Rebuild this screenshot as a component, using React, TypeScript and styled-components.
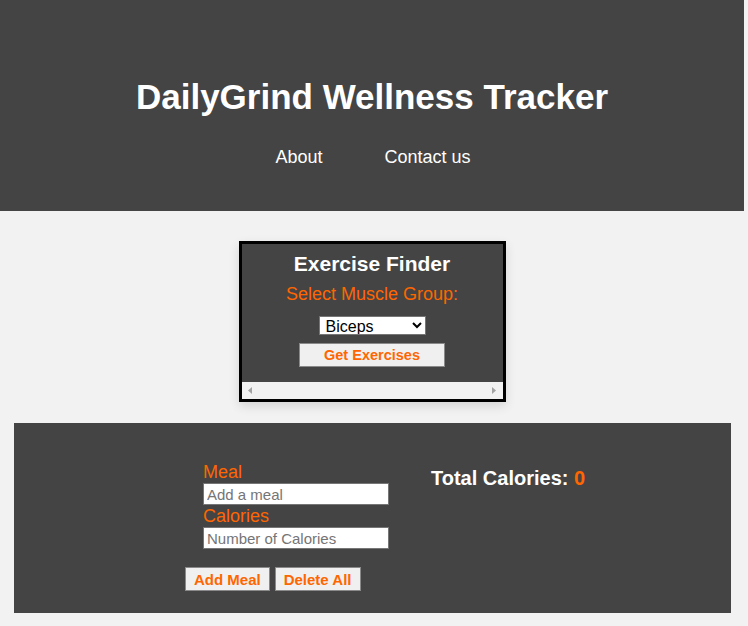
import React, { useState } from 'react'
import styled, { createGlobalStyle } from 'styled-components'

const orange = '#ff6600'
const dark = '#444444'

const GlobalStyle = createGlobalStyle`
  body {
    margin: 0;
    background: #f2f2f2;
    font-family: 'Liberation Sans', Arial, sans-serif;
  }
`

const muscleGroups = ['Biceps', 'Triceps', 'Chest', 'Back', 'Shoulders', 'Legs', 'Abs']

const Arrow = ({ dir }: { dir: 'left' | 'right' }) => (
  <svg width="4" height="7" viewBox="0 0 4 7">
    <path d={dir === 'left' ? 'M4 0 L0 3.5 L4 7 Z' : 'M0 0 L4 3.5 L0 7 Z'} fill="#a3a3a3" />
  </svg>
)

const App = () => {
  const [muscle, setMuscle] = useState('Biceps')
  const [meal, setMeal] = useState('')
  const [calories, setCalories] = useState('')
  const [total, setTotal] = useState(0)

  const addMeal = () => {
    const n = parseInt(calories, 10)
    if (!meal || isNaN(n)) return
    setTotal(total + n)
    setMeal('')
    setCalories('')
  }

  return (
    <Page>
      <GlobalStyle />
      <Header>
        <Title>DailyGrind Wellness Tracker</Title>
        <Nav>
          <NavLink href="#">About</NavLink>
          <NavLink href="#">Contact us</NavLink>
        </Nav>
      </Header>

      <FinderFrame>
        <FinderBody>
          <FinderTitle>Exercise Finder</FinderTitle>
          <FinderLabel htmlFor="muscle">Select Muscle Group:</FinderLabel>
          <MuscleSelect id="muscle" value={muscle} onChange={(e) => setMuscle(e.target.value)}>
            {muscleGroups.map((m) => (
              <option key={m} value={m}>
                {m}
              </option>
            ))}
          </MuscleSelect>
          <ActionButton type="button" $wide>
            Get Exercises
          </ActionButton>
        </FinderBody>
        {/* frame's horizontal scrollbar */}
        <ScrollTrack>
          <Arrow dir="left" />
          <Arrow dir="right" />
        </ScrollTrack>
      </FinderFrame>

      <CalorieSection>
        <MealForm>
          <FieldLabel htmlFor="meal">Meal</FieldLabel>
          <TextInput id="meal" placeholder="Add a meal" value={meal} onChange={(e) => setMeal(e.target.value)} />
          <FieldLabel htmlFor="calories">Calories</FieldLabel>
          <TextInput
            id="calories"
            placeholder="Number of Calories"
            value={calories}
            onChange={(e) => setCalories(e.target.value)}
          />
          <ButtonRow>
            <ActionButton type="button" onClick={addMeal}>
              Add Meal
            </ActionButton>
            <ActionButton type="button" onClick={() => setTotal(0)}>
              Delete All
            </ActionButton>
          </ButtonRow>
        </MealForm>
        <TotalText>
          Total Calories: <span>{total}</span>
        </TotalText>
      </CalorieSection>
    </Page>
  )
}

export default App

const Page = styled.div`
  width: 744px;
`

const Header = styled.header`
  background: ${dark};
  padding: 77px 0 43px;
  text-align: center;
`

const Title = styled.h1`
  margin: 0;
  color: #fff;
  font-size: 35px;
  font-weight: 700;
  line-height: 40px;
`

const Nav = styled.nav`
  display: flex;
  justify-content: center;
  gap: 62px;
  margin-top: 30px;
  padding-left: 2px;
`

const NavLink = styled.a`
  color: #fff;
  font-size: 18px;
  line-height: 21px;
  text-decoration: none;
`

const FinderFrame = styled.div`
  width: 267px;
  height: 161px;
  box-sizing: border-box;
  margin: 30px auto 0;
  border: 3px solid #000;
  background: ${dark};
  box-shadow: 0 4px 10px rgba(0, 0, 0, 0.12);
  display: flex;
  flex-direction: column;
`

const FinderBody = styled.div`
  flex: 1;
  padding-top: 8px;
  display: flex;
  flex-direction: column;
  align-items: center;
`

const ScrollTrack = styled.div`
  height: 17px;
  background: #f1f1f1;
  display: flex;
  align-items: center;
  justify-content: space-between;
  padding: 0 7px 0 6px;
`

const FinderTitle = styled.h2`
  margin: 0;
  color: #fff;
  font-size: 21px;
  font-weight: 700;
  line-height: 23px;
`

const FinderLabel = styled.label`
  margin-top: 9px;
  color: ${orange};
  font-size: 18px;
  line-height: 21px;
`

const MuscleSelect = styled.select`
  margin-top: 11px;
  width: 107px;
  height: 19px;
  box-sizing: border-box;
  font-family: inherit;
  font-size: 16px;
  background: #fff;
  color: #000;
  border: 1px solid #767676;
  border-radius: 0;
  padding: 0 0 0 2px;
`

const ActionButton = styled.button<{ $wide?: boolean }>`
  margin-top: ${({ $wide }) => ($wide ? '8px' : '0')};
  width: ${({ $wide }) => ($wide ? '146px' : 'auto')};
  height: 24px;
  padding: 0 8px;
  box-sizing: border-box;
  background: #f0f0f0;
  color: ${orange};
  border: 1px solid #8a8a8a;
  border-radius: 0;
  font-family: inherit;
  font-size: ${({ $wide }) => ($wide ? '14.5px' : '15px')};
  font-weight: 700;
  cursor: pointer;
`

const CalorieSection = styled.section`
  margin: 21px 13px 0 14px;
  padding: 38px 0 22px 171px;
  background: ${dark};
  display: flex;
  align-items: flex-start;
  gap: 42px;
`

const MealForm = styled.div`
  width: 204px;
  display: flex;
  flex-direction: column;
  align-items: flex-start;
`

const FieldLabel = styled.label`
  margin-left: 18px;
  color: ${orange};
  font-size: 18px;
  line-height: 22px;
`

const TextInput = styled.input`
  margin: 0 0 0 18px;
  width: 186px;
  height: 22px;
  box-sizing: border-box;
  padding: 1px 3px;
  border: 1px solid #767676;
  border-radius: 0;
  font-family: inherit;
  font-size: 15px;
  background: #fff;

  &::placeholder {
    color: #757575;
  }
`

const ButtonRow = styled.div`
  display: flex;
  gap: 5px;
  margin-top: 18px;
`

const TotalText = styled.p`
  margin: 6px 0 0;
  color: #fff;
  font-size: 20px;
  font-weight: 700;
  line-height: 23px;

  span {
    color: ${orange};
  }
`
